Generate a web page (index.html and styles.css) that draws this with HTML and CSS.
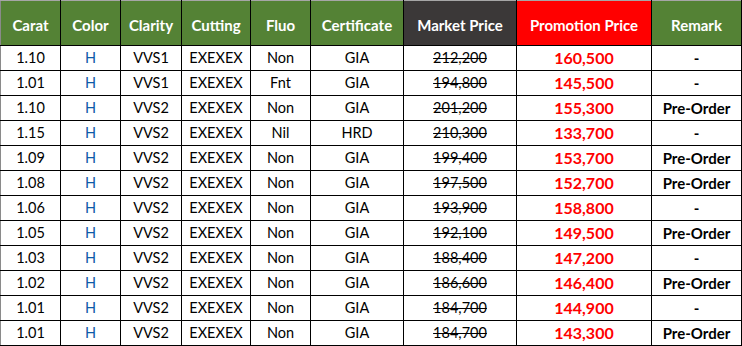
FILE: index.html
```html
<!DOCTYPE html>
<html>
<head>
<meta charset="utf-8">
<link rel="stylesheet" href="styles.css">
</head>
<body>
<table class="price-table">
  <colgroup>
    <col class="c-carat"><col class="c-color"><col class="c-clarity"><col class="c-cut"><col class="c-fluo"><col class="c-cert"><col class="c-market"><col class="c-promo"><col class="c-remark">
  </colgroup>
  <thead>
    <tr>
      <th class="h-green">Carat</th>
      <th class="h-green">Color</th>
      <th class="h-green">Clarity</th>
      <th class="h-green">Cutting</th>
      <th class="h-green">Fluo</th>
      <th class="h-green">Certificate</th>
      <th class="h-dark">Market Price</th>
      <th class="h-red">Promotion Price</th>
      <th class="h-green h-last">Remark</th>
    </tr>
  </thead>
  <tbody>
    <tr><td>1.10</td><td class="color">H</td><td>VVS1</td><td>EXEXEX</td><td>Non</td><td>GIA</td><td class="market">212,200</td><td class="promo">160,500</td><td class="remark">-</td></tr>
    <tr><td>1.01</td><td class="color">H</td><td>VVS1</td><td>EXEXEX</td><td>Fnt</td><td>GIA</td><td class="market">194,800</td><td class="promo">145,500</td><td class="remark">-</td></tr>
    <tr><td>1.10</td><td class="color">H</td><td>VVS2</td><td>EXEXEX</td><td>Non</td><td>GIA</td><td class="market">201,200</td><td class="promo">155,300</td><td class="remark">Pre-Order</td></tr>
    <tr><td>1.15</td><td class="color">H</td><td>VVS2</td><td>EXEXEX</td><td>Nil</td><td>HRD</td><td class="market">210,300</td><td class="promo">133,700</td><td class="remark">-</td></tr>
    <tr><td>1.09</td><td class="color">H</td><td>VVS2</td><td>EXEXEX</td><td>Non</td><td>GIA</td><td class="market">199,400</td><td class="promo">153,700</td><td class="remark">Pre-Order</td></tr>
    <tr><td>1.08</td><td class="color">H</td><td>VVS2</td><td>EXEXEX</td><td>Non</td><td>GIA</td><td class="market">197,500</td><td class="promo">152,700</td><td class="remark">Pre-Order</td></tr>
    <tr><td>1.06</td><td class="color">H</td><td>VVS2</td><td>EXEXEX</td><td>Non</td><td>GIA</td><td class="market">193,900</td><td class="promo">158,800</td><td class="remark">-</td></tr>
    <tr><td>1.05</td><td class="color">H</td><td>VVS2</td><td>EXEXEX</td><td>Non</td><td>GIA</td><td class="market">192,100</td><td class="promo">149,500</td><td class="remark">Pre-Order</td></tr>
    <tr><td>1.03</td><td class="color">H</td><td>VVS2</td><td>EXEXEX</td><td>Non</td><td>GIA</td><td class="market">188,400</td><td class="promo">147,200</td><td class="remark">-</td></tr>
    <tr><td>1.02</td><td class="color">H</td><td>VVS2</td><td>EXEXEX</td><td>Non</td><td>GIA</td><td class="market">186,600</td><td class="promo">146,400</td><td class="remark">Pre-Order</td></tr>
    <tr><td>1.01</td><td class="color">H</td><td>VVS2</td><td>EXEXEX</td><td>Non</td><td>GIA</td><td class="market">184,700</td><td class="promo">144,900</td><td class="remark">-</td></tr>
    <tr><td>1.01</td><td class="color">H</td><td>VVS2</td><td>EXEXEX</td><td>Non</td><td>GIA</td><td class="market">184,700</td><td class="promo">143,300</td><td class="remark">Pre-Order</td></tr>
  </tbody>
</table>
</body>
</html>
```

FILE: styles.css
```css
html, body {
  margin: 0;
  padding: 0;
  background: #ffffff;
}

.price-table {
  border-collapse: collapse;
  table-layout: fixed;
  width: 741px;
  font-family: Lato, "Liberation Sans", sans-serif;
  font-size: 14.5px;
  color: #000000;
}

.c-carat { width: 60px; }
.c-color { width: 60px; }
.c-clarity { width: 61px; }
.c-cut { width: 69px; }
.c-fluo { width: 60px; }
.c-cert { width: 93px; }
.c-market { width: 113px; }
.c-promo { width: 135px; }
.c-remark { width: 90px; }

.price-table th {
  height: 45px;
  padding: 3px 0 0 0;
  box-sizing: border-box;
  color: #ffffff;
  font-weight: 700;
  font-size: 15px;
  text-align: center;
  vertical-align: middle;
  border-top: 1px solid #a6a6a6;
  border-left: 1px solid #000000;
  border-right: 1px solid #000000;
  border-bottom: 1px solid #000000;
}

.price-table th:first-child {
  border-left: 1px solid #8a8a8a;
}

.h-green { background: #548235; }
.h-dark { background: #3b3838; }
.h-red { background: #ff0000; }

.price-table td {
  height: 24px;
  padding: 0;
  text-align: center;
  vertical-align: middle;
  border: 1px solid #000000;
  line-height: 18px;
}

.price-table td:first-child {
  border-left: 1px solid #8a8a8a;
}

.color {
  color: #0e5aa8;
}

.market {
  text-decoration: line-through;
  text-decoration-thickness: 1px;
}

.promo {
  color: #ff0000;
  font-weight: 700;
  font-size: 16px;
}

.remark {
  font-weight: 700;
  font-size: 15px;
}
```
